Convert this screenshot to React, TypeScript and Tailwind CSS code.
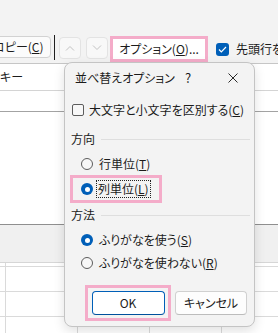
import React from 'react';

function Radio({ checked }: { checked?: boolean }) {
  if (checked) {
    return (
      <span className="w-[12px] h-[12px] rounded-full bg-[#005fb8] flex items-center justify-center shrink-0">
        <span className="w-[5px] h-[5px] rounded-full bg-white" />
      </span>
    );
  }
  return <span className="w-[12px] h-[12px] rounded-full border border-[#5c5c5c] bg-[#f7f7f7] shrink-0" />;
}

function GroupLabel({ text }: { text: string }) {
  return (
    <div className="h-[18px] flex items-center pl-[6px] pr-[4px]">
      <span className="leading-none">{text}</span>
      <span className="flex-1 h-px bg-[#dedede] ml-[6px]" />
    </div>
  );
}

export default function App() {
  const gridRow = (
    <div className="h-[25px] flex border-b border-[#dadada]">
      <div className="w-[6px] border-r border-[#dadada]" />
      <div className="w-[72px] border-r border-[#dadada]" />
      <div className="w-[72px] border-r border-[#dadada]" />
      <div className="w-[72px] border-r border-[#dadada]" />
      <div className="flex-1" />
    </div>
  );

  return (
    <div className="relative w-[278px] h-[333px] overflow-hidden bg-white text-[12px] text-[#1b1b1b] font-['Noto_Sans_CJK_JP',sans-serif] [font-feature-settings:'palt']">
      {/* ツールバー */}
      <div className="h-[64px] bg-[#f3f3f3] pt-[36px] flex items-start border-b border-[#c6c6c6] whitespace-nowrap">
        <div className="ml-[-14px] w-[65px] h-[22px] rounded-[4px] border border-[#d2d2d2] bg-[#fbfbfb] flex items-center justify-center shrink-0">
          コピー(<span className="underline">C</span>)
        </div>
        <div className="ml-[3px] mt-[-1px] w-px h-[25px] bg-[#1f1f1f] shrink-0" />
        <div className="ml-[4px] mt-[1px] w-[22px] h-[22px] rounded-[4px] border border-[#e3e3e3] bg-[#f8f8f8] flex items-center justify-center shrink-0">
          <svg width="10" height="6" viewBox="0 0 10 6" fill="none" stroke="#c2c2c2" strokeWidth="1">
            <path d="M1 5.5L5 1.5L9 5.5" />
          </svg>
        </div>
        <div className="ml-[5px] mt-[1px] w-[22px] h-[22px] rounded-[4px] border border-[#e3e3e3] bg-[#f8f8f8] flex items-center justify-center shrink-0">
          <svg width="10" height="6" viewBox="0 0 10 6" fill="none" stroke="#c2c2c2" strokeWidth="1">
            <path d="M1 0.5L5 4.5L9 0.5" />
          </svg>
        </div>
        <div className="ml-[2px] w-[98px] h-[26px] border-[3px] border-[#f4acc9] bg-white flex items-center justify-center shrink-0">
          オプション(<span className="underline">O</span>)...
        </div>
        <div className="ml-[8px] mt-[7px] w-[13px] h-[13px] rounded-[3px] bg-[#005fb8] flex items-center justify-center shrink-0">
          <svg width="9" height="7" viewBox="0 0 9 7" fill="none" stroke="white" strokeWidth="1.2">
            <path d="M1 3.5L3.3 5.8L8 1" />
          </svg>
        </div>
        <div className="ml-[7px] h-[26px] flex items-center">先頭行を含む</div>
      </div>

      {/* 並べ替えダイアログ（背面） */}
      <div className="h-[27px] flex items-center border-b border-[#d4d4d4] whitespace-nowrap">キー</div>
      <div className="h-[21px] border-b border-[#a3a3a3]" />
      <div className="h-[113px] border-b border-[#8f8f8f]" />
      <div className="h-[38px] bg-[#f0f0f0] border-b border-[#d6d6d6]" />
      <div className="h-[4px] border-b border-[#dadada] flex">
        <div className="w-[6px] border-r border-[#dadada]" />
        <div className="w-[72px] border-r border-[#dadada]" />
        <div className="w-[72px] border-r border-[#dadada]" />
        <div className="w-[72px] border-r border-[#dadada]" />
      </div>
      {gridRow}
      {gridRow}
      {gridRow}

      {/* 並べ替えオプション */}
      <div className="absolute left-[64px] top-[62px] w-[191px] h-[265px] rounded-[8px] border border-[#c4c4c4] bg-[#f3f3f3] shadow-[0_4px_12px_rgba(0,0,0,0.12)] flex flex-col whitespace-nowrap">
        <div className="h-[30px] flex items-center pl-[10px] pr-[9px]">
          <span className="flex-1">並べ替えオプション</span>
          <span className="w-[24px] text-center text-[13px]">?</span>
          <span className="ml-[21px] w-[24px] flex items-center justify-center">
            <svg width="10" height="10" viewBox="0 0 10 10" fill="none" stroke="#2b2b2b" strokeWidth="1">
              <path d="M0.5 0.5L9.5 9.5M9.5 0.5L0.5 9.5" />
            </svg>
          </span>
        </div>

        <div className="mt-[7px] h-[20px] flex items-center pl-[7px] gap-[5px]">
          <span className="w-[12px] h-[12px] rounded-[2px] border border-[#5c5c5c] bg-[#f7f7f7] shrink-0" />
          <span>大文字と小文字を区別する(<span className="underline">C</span>)</span>
        </div>

        <div className="mt-[10px]">
          <GroupLabel text="方向" />
        </div>
        <div className="mt-[6px] h-[20px] flex items-center pl-[16px] gap-[6px]">
          <Radio />
          <span>行単位(<span className="underline">T</span>)</span>
        </div>
        <div className="mt-[1px] ml-[5px] w-[92px] h-[28px] border-[3px] border-[#f4acc9] flex items-center pl-[8px] gap-[4px]">
          <Radio checked />
          <span className="outline-1 outline-dotted outline-[#222] px-[1px] leading-[16px]">
            列単位(<span className="underline">L</span>)
          </span>
        </div>

        <div className="mt-[3px]">
          <GroupLabel text="方法" />
        </div>
        <div className="mt-[6px] h-[20px] flex items-center pl-[16px] gap-[6px]">
          <Radio checked />
          <span>ふりがなを使う(<span className="underline">S</span>)</span>
        </div>
        <div className="mt-[3px] h-[20px] flex items-center pl-[16px] gap-[6px]">
          <Radio />
          <span>ふりがなを使わない(<span className="underline">R</span>)</span>
        </div>

        <div className="mt-[12px] flex items-center pl-[20px]">
          <div className="w-[86px] h-[36px] border-[3px] border-[#f4acc9] flex items-center justify-center">
            <div className="w-[73px] h-[24px] rounded-[4px] border border-[#005fb8] border-b-[#00509c] bg-white flex items-center justify-center">
              OK
            </div>
          </div>
          <div className="ml-[4px] w-[72px] h-[24px] rounded-[4px] border border-[#d0d0d0] border-b-[#bcbcbc] bg-[#fdfdfd] flex items-center justify-center">
            キャンセル
          </div>
        </div>
      </div>
    </div>
  );
}
